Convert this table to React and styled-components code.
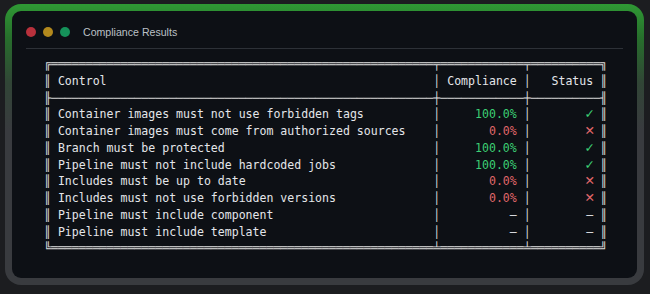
import React from 'react'
import styled, { createGlobalStyle } from 'styled-components'

const green = '#3ccf74'
const red = '#e0676a'
const ink = '#e4e6ea'
const rule = '#dcdcdc'

const GlobalStyle = createGlobalStyle`
  html, body {
    margin: 0;
    padding: 0;
    background: #1c1d20;
  }
`

const Window = styled.div`
  box-sizing: border-box;
  width: 639px;
  height: 281px;
  margin: 4px 0 0 5px;
  border: 7px solid transparent;
  border-radius: 16px;
  background:
    linear-gradient(#0d1015, #0d1015) padding-box,
    linear-gradient(180deg, #2f9934 0%, #276f2c 12%, #314536 28%, #393b3f 45%, #393b3f 100%) border-box;
  padding: 0 14px;
`

const TitleBar = styled.div`
  display: flex;
  align-items: center;
  height: 33px;
  padding-top: 4px;
  border-bottom: 1px solid #2d3137;
`

const Light = styled.span`
  width: 10px;
  height: 10px;
  border-radius: 50%;
  background: ${props => props.color};
  margin-right: 7px;
`

const Title = styled.span`
  margin-left: 6px;
  font-family: 'Liberation Sans', Arial, sans-serif;
  font-size: 10.6px;
  color: #bcc0c6;
`

const Terminal = styled.div`
  margin: 7px 0 0 18px;
  font-family: 'DejaVu Sans Mono', monospace;
  font-size: 11.56px;
  line-height: 16.75px;
  color: ${ink};
`

const Line = styled.div`
  white-space: pre;
  height: 16.75px;
`

const Box = styled.span`
  color: ${rule};
`

const Value = styled.span`
  color: ${props => props.color || ink};
`

const Glyph = styled.span`
  display: inline-block;
  width: 1ch;
  text-align: center;
  color: ${props => props.color || ink};
  & > span {
    font-size: ${props => (props.mark ? '12.5px' : '11.56px')};
    font-family: ${props => (props.mark ? "'DejaVu Sans', sans-serif" : 'inherit')};
    margin: 0 -4px;
  }
`

const rows = [
  ['Container images must not use forbidden tags', 'pass'],
  ['Container images must come from authorized sources', 'fail'],
  ['Branch must be protected', 'pass'],
  ['Pipeline must not include hardcoded jobs', 'pass'],
  ['Includes must be up to date', 'fail'],
  ['Includes must not use forbidden versions', 'fail'],
  ['Pipeline must include component', 'none'],
  ['Pipeline must include template', 'none']
]

const result = {
  pass: { value: '100.0%', glyph: '✓', color: green, mark: true },
  fail: { value: '0.0%', glyph: '✕', color: red, mark: true },
  none: { value: '–', glyph: '–', color: ink, mark: false }
}

const edge = (l, fill, mid, r) => (
  <Line>
    <Box>{l + fill.repeat(55) + mid + fill.repeat(12) + mid + fill.repeat(10) + r}</Box>
  </Line>
)

const Row = ({ control, status }) => {
  const r = result[status]
  return (
    <Line>
      <Box>║</Box>
      {' ' + control.padEnd(54)}
      <Box>│</Box>
      <Value color={r.color}>{r.value.padStart(11)}</Value>
      {' '}
      <Box>│</Box>
      {' '.repeat(8)}
      <Glyph color={r.color} mark={r.mark}>
        <span>{r.glyph}</span>
      </Glyph>
      {' '}
      <Box>║</Box>
    </Line>
  )
}

export default function App() {
  return (
    <>
      <GlobalStyle />
      <Window>
        <TitleBar>
          <Light color="#b8313c" />
          <Light color="#b3891d" />
          <Light color="#15925a" />
          <Title>Compliance Results</Title>
        </TitleBar>
        <Terminal>
          {edge('╔', '═', '╤', '╗')}
          <Line>
            <Box>║</Box>
            {' ' + 'Control'.padEnd(54)}
            <Box>│</Box>
            {' Compliance '}
            <Box>│</Box>
            {'   Status '}
            <Box>║</Box>
          </Line>
          {edge('╟', '─', '┼', '╢')}
          {rows.map(([control, status]) => (
            <Row key={control} control={control} status={status} />
          ))}
          {edge('╚', '═', '╧', '╝')}
        </Terminal>
      </Window>
    </>
  )
}
